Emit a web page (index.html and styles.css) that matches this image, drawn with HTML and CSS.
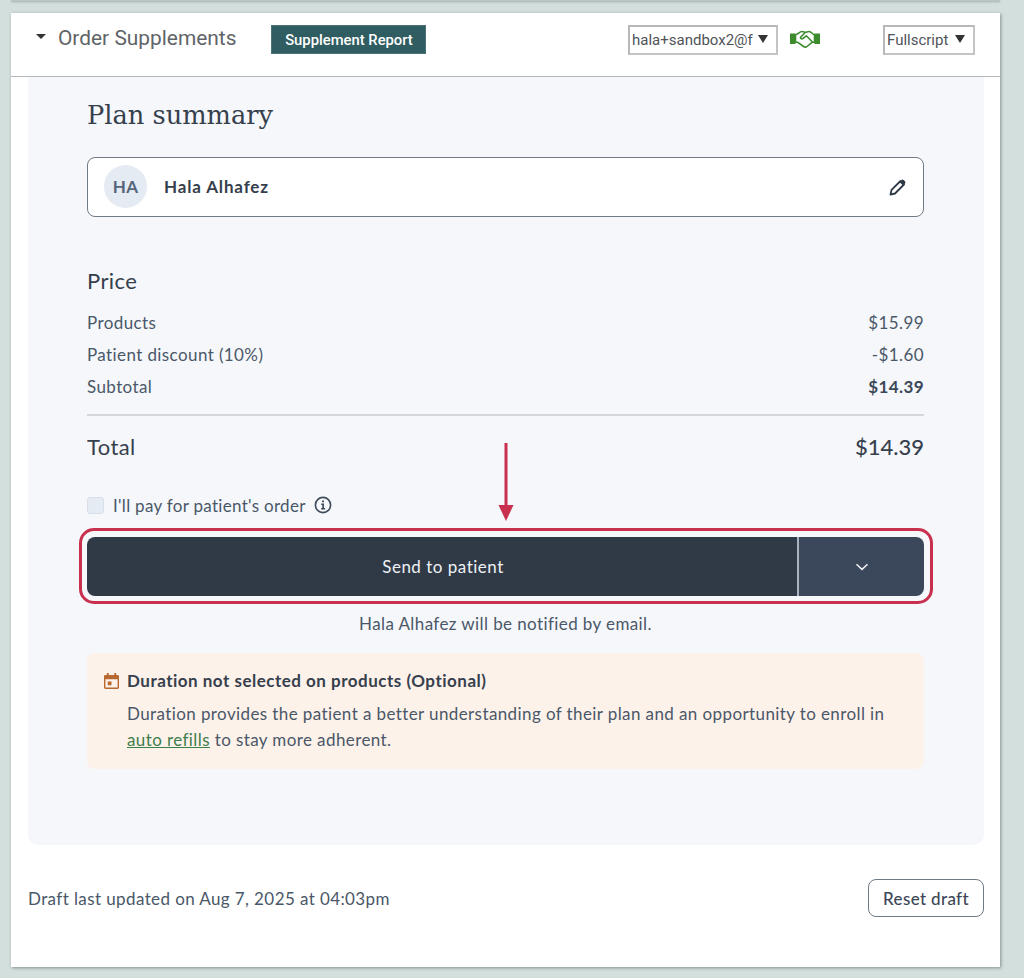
FILE: index.html
```html
<!DOCTYPE html>
<html lang="en">
<head>
<meta charset="utf-8">
<title>Order Supplements</title>
<link rel="stylesheet" href="styles.css">
</head>
<body>
<div class="prev-card"></div>
<main class="card">
  <header class="topbar">
    <div class="topbar-left">
      <span class="caret"></span>
      <h1 class="page-title">Order Supplements</h1>
      <button class="report-btn">Supplement Report</button>
    </div>
    <div class="select user-select"><span class="select-text">hala+sandbox2@f</span><span class="select-arrow"></span></div>
    <svg class="shake" viewBox="0 0 30 18" width="30" height="18" aria-hidden="true">
      <path fill="#3c8c2e" d="M0 3.500h5.500v10.500H0zM24.500 3.500H30v10.500h-5.500z"/>
      <path fill="none" stroke="#3c8c2e" stroke-width="1.600" stroke-linejoin="round" stroke-linecap="round" d="M5.500 4.800C8 4.500 9.500 1.500 12 1.500c1.500 0 2.500.8 3.500.8s2-.8 3.500-.8c2.500 0 3.500 3 5.500 3.300v7.400h-2.200l-5.300 4.300c-1 .8-2.500.7-3.500 0l-6-4.300H5.500zM15.500 2.300 10.800 7c-.8 1 .7 2.300 1.900 1.600l3.600-2.800 6.200 6.200"/>
    </svg>
    <div class="select brand-select"><span class="select-text">Fullscript</span><span class="select-arrow"></span></div>
  </header>

  <section class="panel">
    <h2 class="summary-title">Plan summary</h2>
    <div class="patient">
      <span class="avatar">HA</span>
      <span class="patient-name">Hala Alhafez</span>
      <svg class="pencil" viewBox="0 0 18 18" width="18" height="18" aria-hidden="true">
        <path fill="none" stroke="#2f3a47" stroke-width="1.800" stroke-linejoin="round" d="M1.500 16.500l1-4.600L11.500 3l3.500 3.500-9 9z"/>
        <path fill="#2f3a47" d="M10.500 4l2-2a1.600 1.600 0 0 1 2.200 0l1.300 1.300a1.600 1.600 0 0 1 0 2.200l-2 2z"/>
      </svg>
    </div>

    <h3 class="price-title">Price</h3>
    <div class="row"><span>Products</span><span>$15.99</span></div>
    <div class="row"><span>Patient discount (10%)</span><span>-$1.60</span></div>
    <div class="row"><span>Subtotal</span><strong>$14.39</strong></div>
    <div class="total"><span>Total</span><span class="total-value">$14.39</span></div>

    <div class="pay">
      <span class="checkbox"></span>
      <span>I'll pay for patient's order</span>
      <svg class="info" viewBox="0 0 18 18" width="18" height="18" aria-hidden="true">
        <circle cx="9" cy="9" r="7.600" fill="none" stroke="#3f4c5c" stroke-width="1.600"/>
        <path fill="#3f4c5c" d="M8.100 4.400h1.900v1.800H8.100zM7.200 7.500h2.800v4.600h1.100v1.400H7.100v-1.400h1.200V8.900H7.200z"/>
      </svg>
    </div>

    <div class="send">
      <div class="annotation-box"></div>
      <svg class="annotation-arrow" viewBox="0 0 16 80" width="16" height="80" aria-hidden="true">
        <path fill="#c9304e" d="M6.500 0h3v63h-3zM0.500 62h15L8 78z"/>
      </svg>
      <button class="send-main">Send to patient</button>
      <button class="send-more" aria-label="More">
        <svg viewBox="0 0 14 8" width="14" height="8" aria-hidden="true"><path fill="none" stroke="#eef1f4" stroke-width="1.500" d="M1.500 1.200 7 6.400l5.500-5.200"/></svg>
      </button>
    </div>
    <p class="notify">Hala Alhafez will be notified by email.</p>

    <div class="notice">
      <svg class="calendar" viewBox="0 0 16 17" width="15" height="16" aria-hidden="true">
        <path fill="#b8692f" d="M3 0h2v2h6V0h2v2h1.500A1.500 1.500 0 0 1 16 3.500V15.500A1.500 1.500 0 0 1 14.500 17H1.500A1.500 1.500 0 0 1 0 15.500V3.500A1.500 1.500 0 0 1 1.500 2H3zM1.500 6.500v9h13v-9zM4 9h4v4H4z"/>
      </svg>
      <div class="notice-body">
        <strong class="notice-title">Duration not selected on products (Optional)</strong>
        <p class="notice-text">Duration provides the patient a better understanding of their plan and an opportunity to enroll in <a class="notice-link" href="#">auto refills</a> to stay more adherent.</p>
      </div>
    </div>
  </section>

  <footer class="footer">
    <span>Draft last updated on Aug 7, 2025 at 04:03pm</span>
    <button class="reset-btn">Reset draft</button>
  </footer>
</main>
</body>
</html>
```
FILE: styles.css
```css
* { box-sizing: border-box; }
html, body { margin: 0; padding: 0; }
body {
  height: 978px;
  overflow: hidden;
  background: #d2dfdd;
  font-family: "Lato", "Noto Sans", sans-serif;
  color: #4a5768;
  padding: 0 24px 0 11px;
}
button { font-family: inherit; cursor: pointer; }
.prev-card { height: 1px; background: #b9c6c5; box-shadow: 0 1px 2px rgba(60, 70, 70, .45); }
.card {
  margin-top: 12px;
  height: 954px;
  background: #fff;
  box-shadow: 1px 1px 3px rgba(60, 70, 70, .5);
  display: flex;
  flex-direction: column;
}
.topbar {
  height: 64px;
  flex: none;
  display: flex;
  align-items: flex-start;
  padding: 12px 25px 0 25px;
  border-bottom: 1px solid #b4b9bc;
}
.topbar-left { display: flex; align-items: flex-start; flex: 1; }
.caret {
  width: 0; height: 0; margin: 9px 0 0 0;
  border-left: 5px solid transparent;
  border-right: 5px solid transparent;
  border-top: 5px solid #333;
}
.page-title {
  margin: 0 0 0 12px;
  font: 400 20.900px/26px "Roboto", sans-serif;
  color: #5f6468;
}
.report-btn {
  margin-left: 35px;
  height: 29px;
  width: 155px;
  background: #2f5d62;
  border: 1px solid #4a7478;
  color: #fff;
  font: 500 14.800px/1 "Roboto", sans-serif;
  padding: 2px 0 0;
}
.select {
  height: 30px;
  border: 2px solid #c4c4c4;
  border-top-color: #b8b8b8;
  border-left-color: #b8b8b8;
  display: flex;
  align-items: center;
  justify-content: space-between;
  padding: 0 8px 0 2px;
  font: 400 15px/1 "Roboto", sans-serif;
  color: #4f5459;
  background: #fff;
}
.select-arrow {
  width: 0; height: 0;
  border-left: 5.500px solid transparent;
  border-right: 5.500px solid transparent;
  border-top: 8px solid #333;
  margin-top: -3px;
}
.user-select { width: 150px; margin-left: 1px; }
.brand-select { width: 92px; margin-left: 63px; padding-left: 2px; }
.shake { margin: 5px 0 0 12px; flex: none; }

.panel {
  flex: none;
  width: 956px;
  height: 768px;
  margin-left: 17px;
  background: #f5f7fb;
  border-radius: 0 0 10px 10px;
  padding: 20px 60px 0 59px;
  letter-spacing: .4px;
  font-size: 17px;
}
.summary-title {
  margin: 0;
  font: 400 25.700px/36px "DejaVu Serif", serif;
  letter-spacing: 0;
  color: #36404d;
}
.patient {
  margin-top: 24px;
  height: 60px;
  background: #fff;
  border: 1px solid #6f7a86;
  border-radius: 8px;
  display: flex;
  align-items: center;
  padding: 0 16px 1px;
  gap: 17px;
}
.avatar {
  width: 43px; height: 43px;
  border-radius: 50%;
  background: #e4ebf3;
  display: flex; align-items: center; justify-content: center;
  font-size: 17px; font-weight: 700; color: #56657a;
  letter-spacing: .3px;
}
.patient-name { flex: 1; font-weight: 700; color: #36404d; letter-spacing: .85px; }
.pencil { flex: none; }
.price-title {
  margin: 50px 0 12px;
  font-size: 22px; font-weight: 400; line-height: 28px;
  color: #36404d;
}
.row {
  display: flex; justify-content: space-between;
  line-height: 32px;
}
.row strong { color: #3c4757; }
.total {
  margin-top: 11px;
  border-top: 2px solid #d3d6da;
  padding-top: 17px;
  display: flex; justify-content: space-between;
  font-size: 22px; line-height: 28px;
  color: #36404d;
}
.total-value { font-weight: 500; letter-spacing: 0; }
.pay {
  margin-top: 32px;
  height: 24px;
  display: flex; align-items: center;
  letter-spacing: .3px;
}
.checkbox {
  width: 17px; height: 17px;
  background: #e4ebf3;
  border: 1px solid #d8dfe8;
  border-radius: 3px;
  margin-right: 9px;
}
.info { margin-left: 8px; }
.send {
  position: relative;
  margin-top: 20px;
  height: 59px;
  display: flex;
}
.annotation-box {
  position: absolute;
  inset: -9px -9px -8px -8px;
  border: 3px solid #c9304e;
  border-radius: 15px;
  pointer-events: none;
}
.annotation-arrow { position: absolute; left: 411px; top: -94px; }
.send-main {
  flex: 1;
  border: 0;
  background: #303a47;
  border-radius: 8px 0 0 8px;
  color: #eef1f4;
  font-size: 17px;
  font-weight: 400;
  letter-spacing: .5px;
  padding: 0 0 0 2px;
}
.send-more {
  width: 127px;
  border: 0;
  border-left: 2px solid #a9b2bd;
  background: #3b485b;
  border-radius: 0 8px 8px 0;
  padding: 0;
  display: flex; align-items: center; justify-content: center;
}
.notify {
  margin: 16px 0 0;
  text-align: center;
  line-height: 24px;
}
.notice {
  margin-top: 17px;
  height: 116px;
  background: #fdf2ea;
  border-radius: 8px;
  padding: 16px 16px 0;
  display: flex;
  gap: 8px;
}
.calendar { flex: none; margin: 4px 0 0 1px; }
.notice-title { display: block; line-height: 24px; color: #36404d; letter-spacing: .5px; }
.notice-text { margin: 8px 0 0; line-height: 26px; }
.notice-link { color: #3f7d4c; }
.footer {
  flex: none;
  margin: 34px 16px 0 17px;
  display: flex;
  justify-content: space-between;
  align-items: center;
  font-size: 17px;
  letter-spacing: .4px;
}
.reset-btn {
  width: 116px; height: 38px;
  background: #fff;
  border: 1px solid #6f7a86;
  border-radius: 8px;
  color: #3c4757;
  font-size: 17px;
  font-weight: 500;
  letter-spacing: .35px;
  padding: 0;
}
```
